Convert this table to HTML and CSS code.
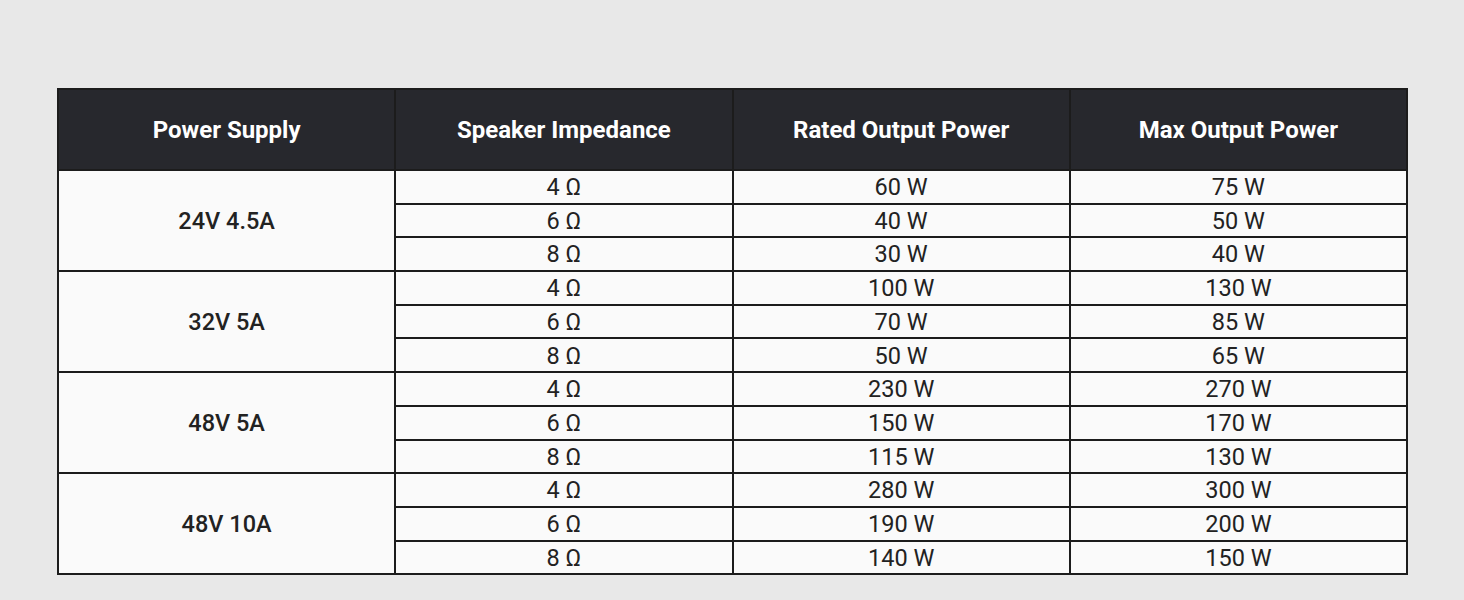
FILE: index.html
```html
<!DOCTYPE html>
<html>
<head>
<meta charset="utf-8">
<link rel="stylesheet" href="styles.css">
</head>
<body>
<div class="page">
<table class="spec">
<thead>
<tr><th>Power Supply</th><th>Speaker Impedance</th><th>Rated Output Power</th><th>Max Output Power</th></tr>
</thead>
<tbody>
<tr><td class="ps" rowspan="3">24V 4.5A</td><td>4 Ω</td><td>60 W</td><td>75 W</td></tr>
<tr><td>6 Ω</td><td>40 W</td><td>50 W</td></tr>
<tr><td>8 Ω</td><td>30 W</td><td>40 W</td></tr>
<tr><td class="ps" rowspan="3">32V 5A</td><td>4 Ω</td><td>100 W</td><td>130 W</td></tr>
<tr><td>6 Ω</td><td>70 W</td><td>85 W</td></tr>
<tr><td>8 Ω</td><td>50 W</td><td>65 W</td></tr>
<tr><td class="ps" rowspan="3">48V 5A</td><td>4 Ω</td><td>230 W</td><td>270 W</td></tr>
<tr><td>6 Ω</td><td>150 W</td><td>170 W</td></tr>
<tr><td>8 Ω</td><td>115 W</td><td>130 W</td></tr>
<tr><td class="ps" rowspan="3">48V 10A</td><td>4 Ω</td><td>280 W</td><td>300 W</td></tr>
<tr><td>6 Ω</td><td>190 W</td><td>200 W</td></tr>
<tr><td>8 Ω</td><td>140 W</td><td>150 W</td></tr>
</tbody>
</table>
</div>
</body>
</html>
```
FILE: styles.css
```css
html, body {
  margin: 0;
  padding: 0;
  background: #e8e8e8;
}
.page {
  padding: 88px 0 0 57px;
  height: 512px;
}
.spec {
  border-collapse: collapse;
  width: 1351px;
  table-layout: fixed;
  font-family: Roboto, "Liberation Sans", sans-serif;
  border: 2px solid #1c1c1c;
}
.spec th, .spec td {
  border: 2px solid #1c1c1c;
  text-align: center;
  padding: 0;
  line-height: 1;
}
.spec th {
  background: #27282d;
  color: #ffffff;
  font-weight: 700;
  font-size: 24px;
  height: 79px;
}
.spec td {
  background: #fafafa;
  color: #222222;
  font-size: 23.5px;
  height: 29.7px;
  padding-top: 2px;
}
.spec td.ps {
  font-weight: 500;
}
```
